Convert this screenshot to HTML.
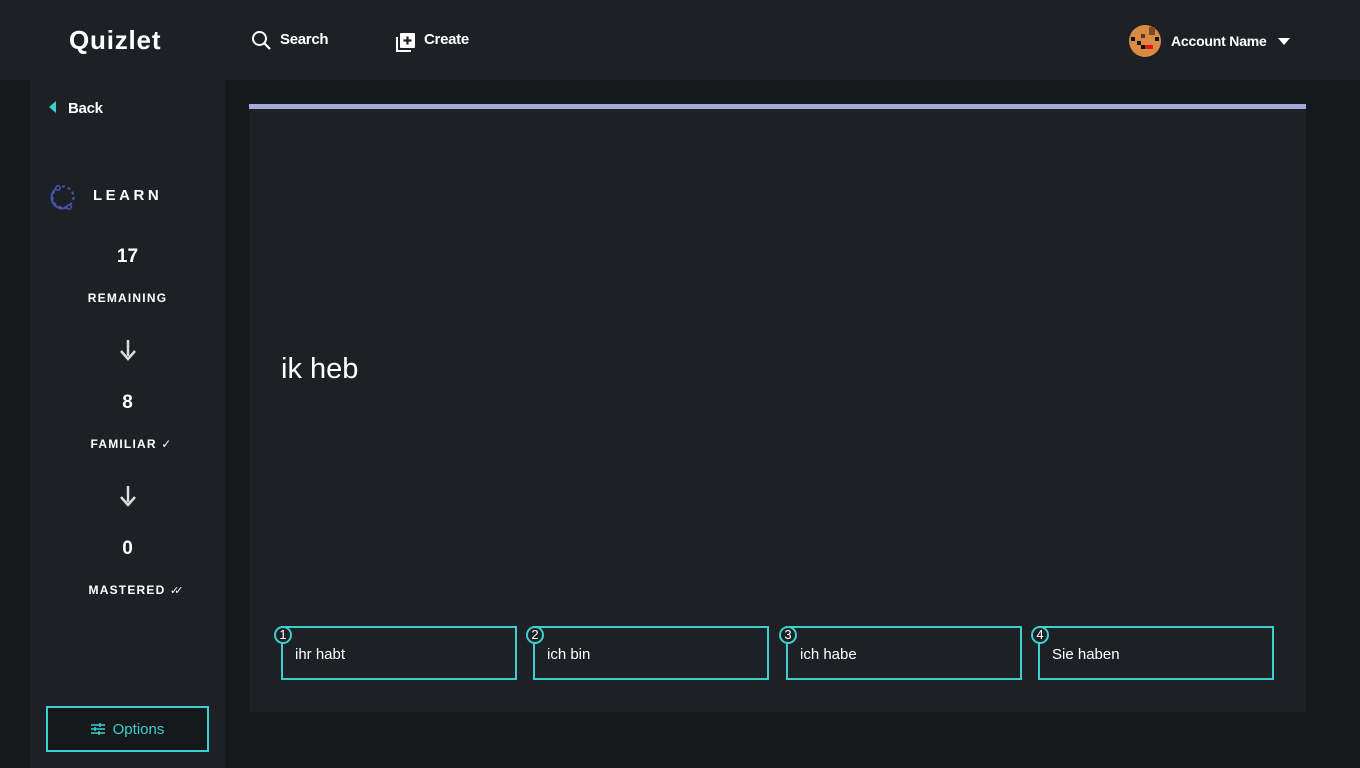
<!DOCTYPE html>
<html><head><meta charset="utf-8"><style>
*{margin:0;padding:0;box-sizing:border-box}
body{width:1360px;height:768px;background:#15191c;font-family:"Liberation Sans",sans-serif;color:#fff;position:relative;overflow:hidden}
.hdr{position:absolute;left:0;top:0;width:1360px;height:80px;background:#1d2125}
.abs{position:absolute}
.side{position:absolute;left:30px;top:80px;width:195px;height:688px;background:#1d2125}
.card{position:absolute;left:249px;top:104px;width:1057px;height:608px;background:#1d2125;border-top:5px solid #a3a9d9}
.num{position:absolute;width:195px;text-align:center;font-weight:bold}
.lbl{position:absolute;width:195px;text-align:center;font-weight:bold;font-size:12px;letter-spacing:1.2px}
.arr{position:absolute;left:88px;width:20px;height:22px}
.ans{position:absolute;top:626px;height:54px;width:236px;border:2px solid #3ccfcf;font-size:15px;padding:18px 0 0 12px}
.ans i{position:absolute;left:-9px;top:-2px;width:18px;height:18px;border:2px solid #3ccfcf;border-radius:50%;background:#1d2125;font-style:normal;font-size:13px;text-align:center;line-height:14px}
</style></head><body>
<div class="hdr">
 <div class="abs" style="left:69px;top:25px;font-size:26px;font-weight:bold;letter-spacing:0.8px">Quizlet</div>
 <svg class="abs" style="left:251px;top:30px" width="22" height="22" viewBox="0 0 22 22"><circle cx="8.5" cy="8.5" r="6.5" fill="none" stroke="#fff" stroke-width="2"/><path d="M13 13l6 6" stroke="#fff" stroke-width="2.2"/></svg>
 <div class="abs" style="left:280px;top:31px;font-size:15px;font-weight:bold;letter-spacing:-0.3px">Search</div>
 <svg class="abs" style="left:396px;top:32px" width="20" height="20" viewBox="0 0 20 20"><path d="M1 5v14h14" fill="none" stroke="#fff" stroke-width="2"/><rect x="4" y="1" width="15" height="15" rx="1" fill="#fff"/><path d="M11.5 4.5v8M7.5 8.5h8" stroke="#1d2125" stroke-width="2.2"/></svg>
 <div class="abs" style="left:424px;top:31px;font-size:15px;font-weight:bold;letter-spacing:-0.3px">Create</div>
 <svg class="abs" style="left:1129px;top:25px" width="32" height="32" viewBox="0 0 32 32"><circle cx="16" cy="16" r="16" fill="#d98a45"/><rect x="20" y="2" width="6" height="8" fill="#7a4a25"/><rect x="12" y="9" width="4" height="4" fill="#5a3a1d"/><rect x="2" y="12" width="4" height="4" fill="#111"/><rect x="26" y="12" width="4" height="4" fill="#111"/><rect x="8" y="16" width="4" height="4" fill="#111"/><rect x="12" y="20" width="8" height="4" fill="#111"/><rect x="16" y="20" width="8" height="4" fill="#e51515"/></svg>
 <div class="abs" style="left:1171px;top:33px;font-size:14px;font-weight:bold;letter-spacing:-0.2px">Account Name</div>
 <svg class="abs" style="left:1278px;top:38px" width="12" height="7"><path d="M0 0h12L6 7z" fill="#fff"/></svg>
</div>
<div class="side">
 <svg class="abs" style="left:19px;top:21px" width="7" height="12"><path d="M7 0v12L0 6z" fill="#3ccfcf"/></svg>
 <div class="abs" style="left:38px;top:20px;font-size:15px;font-weight:bold;letter-spacing:-0.3px">Back</div>
 <svg class="abs" style="left:20px;top:103px" width="28" height="28" viewBox="0 0 28 28"><circle cx="13" cy="14" r="10.5" fill="none" stroke="#4257b2" stroke-width="2" stroke-dasharray="3 3"/><path d="M7 5a10.5 10.5 0 0 0 11 19" fill="none" stroke="#4257b2" stroke-width="2"/><circle cx="8" cy="5" r="2.2" fill="#1d2125" stroke="#4257b2" stroke-width="1.5"/><circle cx="19" cy="24" r="2.2" fill="#1d2125" stroke="#4257b2" stroke-width="1.5"/></svg>
 <div class="abs" style="left:63px;top:107px;font-size:15px;font-weight:bold;letter-spacing:3.5px">LEARN</div>
 <div class="num" style="top:166px;font-size:19px">17</div>
 <div class="lbl" style="top:211px">REMAINING</div>
 <svg class="arr" style="top:259px" viewBox="0 0 20 22"><path d="M10 1v16M3 12l7 8 7-8" fill="none" stroke="#ddd" stroke-width="2.5"/></svg>
 <div class="num" style="top:312px;font-size:19px">8</div>
 <div class="lbl" style="top:357px;padding-left:8px">FAMILIAR <span style="font-weight:normal">✓</span></div>
 <svg class="arr" style="top:405px" viewBox="0 0 20 22"><path d="M10 1v16M3 12l7 8 7-8" fill="none" stroke="#ddd" stroke-width="2.5"/></svg>
 <div class="num" style="top:458px;font-size:19px">0</div>
 <div class="lbl" style="top:503px;padding-left:12px">MASTERED <span style="font-weight:normal;letter-spacing:-5px;font-size:11px">✓✓</span></div>
 <div class="abs" style="left:16px;top:626px;width:163px;height:46px;border:2px solid #3ccfcf;background:#15191c;color:#3ccfcf;font-size:15px;text-align:center;line-height:44px">
  <svg width="14" height="12" viewBox="0 0 14 12" style="vertical-align:-1px;margin-right:8px"><path d="M0 2h14M0 6h14M0 10h14" stroke="#3ccfcf" stroke-width="1.5"/><path d="M9 0v4M4 4v4M8 8v4" stroke="#3ccfcf" stroke-width="1.5"/></svg>Options</div>
</div>
<div class="card"></div>
<div class="abs" style="left:281px;top:353px;font-size:29px">ik heb</div>
<div class="ans" style="left:281px"><i>1</i>ihr habt</div>
<div class="ans" style="left:533px"><i>2</i>ich bin</div>
<div class="ans" style="left:786px"><i>3</i>ich habe</div>
<div class="ans" style="left:1038px"><i>4</i>Sie haben</div>
</body></html>
